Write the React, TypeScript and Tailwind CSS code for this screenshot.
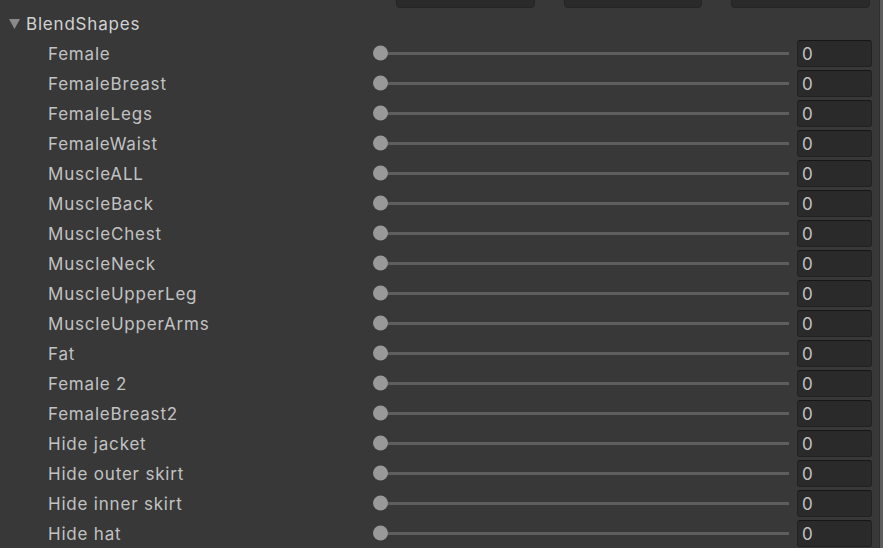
const shapes = [
  "Female",
  "FemaleBreast",
  "FemaleLegs",
  "FemaleWaist",
  "MuscleALL",
  "MuscleBack",
  "MuscleChest",
  "MuscleNeck",
  "MuscleUpperLeg",
  "MuscleUpperArms",
  "Fat",
  "Female 2",
  "FemaleBreast2",
  "Hide jacket",
  "Hide outer skirt",
  "Hide inner skirt",
  "Hide hat",
]

const Slider = () => (
  <div className="relative flex h-full w-[416px] items-center">
    <div className="ml-[10px] h-[3px] flex-1 bg-[#5e5e5e]" />
    <div className="absolute left-0 top-1/2 size-[15px] -translate-y-1/2 rounded-full bg-[#999999]" />
  </div>
)

const Row = ({ label }: { label: string }) => (
  <div className="flex h-[30px] items-center">
    <span className="w-[373px] pl-[48px] pt-[3px] text-[#c2c2c2]">{label}</span>
    <Slider />
    <div className="ml-[8px] flex h-[27px] w-[75px] items-center rounded-[3px] border border-[#212121] border-t-[#161616] bg-[#2a2a2a] pl-[4px] pt-[3px] text-[#c2c2c2]">
      0
    </div>
  </div>
)

export default function App() {
  return (
    <div
      className="flex h-[548px] w-[883px] overflow-hidden bg-[#383838] text-[17px] tracking-[0.8px]"
      style={{ fontFamily: "Inter, 'Noto Sans', sans-serif" }}
    >
      <div className="flex flex-1 flex-col pt-[1px]">
        <div className="flex h-[7px] items-end gap-[29px] pl-[396px]">
          <div className="-mt-[20px] h-[26px] w-[139px] shrink-0 rounded-[4px] border border-[#242424] bg-[#2a2a2a]" />
          <div className="-mt-[20px] h-[26px] w-[138px] shrink-0 rounded-[4px] border border-[#242424] bg-[#2a2a2a]" />
          <div className="-mt-[20px] h-[26px] w-[139px] shrink-0 rounded-[4px] border border-[#242424] bg-[#2a2a2a]" />
        </div>
        <div className="flex h-[30px] items-center pl-[9px] text-[#d2d2d2]">
          <svg width="11" height="10" viewBox="0 0 11 10" className="mr-[6px] mt-[2px]">
            <path d="M0 0 L11 0 L5.5 10 Z" fill="#8a8a8a" />
          </svg>
          <span className="pt-[3px]">BlendShapes</span>
        </div>
        {shapes.map((s) => (
          <Row key={s} label={s} />
        ))}
      </div>
      <div className="w-[1px] bg-[#2e2e2e]" />
      <div className="w-[3px] bg-[#5c5c5c]" />
    </div>
  )
}
